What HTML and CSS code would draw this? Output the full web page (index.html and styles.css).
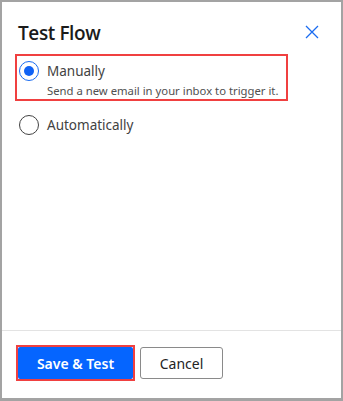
FILE: index.html
```html
<!DOCTYPE html>
<html>
<head>
<meta charset="utf-8">
<link rel="stylesheet" href="styles.css">
</head>
<body>
<div class="panel">
  <div class="header">
    <h1 class="title">Test Flow</h1>
    <button class="close" aria-label="Close">
      <svg width="14" height="14" viewBox="0 0 14 14"><path d="M1 1 L13 13 M13 1 L1 13" stroke="#1a6cf0" stroke-width="1.3" fill="none"/></svg>
    </button>
  </div>
  <div class="content">
    <div class="option highlight">
      <span class="radio checked"><span class="dot"></span></span>
      <div class="opt-text">
        <div class="label">Manually</div>
        <div class="desc">Send a new email in your inbox to trigger it.</div>
      </div>
    </div>
    <div class="option plain">
      <span class="radio"></span>
      <div class="opt-text">
        <div class="label">Automatically</div>
      </div>
    </div>
  </div>
  <div class="footer">
    <span class="primary-wrap"><button class="btn primary">Save &amp; Test</button></span>
    <button class="btn secondary">Cancel</button>
  </div>
</div>
</body>
</html>
```

FILE: styles.css
```css
* { box-sizing: border-box; }
html, body { margin: 0; padding: 0; background: #fff; }
body { font-family: "Segoe UI", "Noto Sans", "Open Sans", sans-serif; color: #242424; }
.panel {
  width: 343px;
  height: 401px;
  border: 2px solid #a3a3a3;
  border-bottom-width: 3px;
  display: flex;
  flex-direction: column;
}
.header {
  display: flex;
  justify-content: space-between;
  align-items: flex-start;
  padding: 17px 22px 0 16px;
}
.title {
  margin: 0;
  font-family: "Open Sans", "Noto Sans", sans-serif;
  font-size: 19px;
  font-weight: 600;
  line-height: 28px;
  color: #1b1b1b;
  letter-spacing: -0.4px;
}
.close {
  border: 0;
  background: none;
  padding: 0;
  margin-top: 6px;
  width: 14px;
  height: 14px;
  display: block;
}
.close svg { display: block; }
.content {
  flex: 1;
  padding: 7px 0 0 13px;
}
.option {
  display: flex;
  align-items: flex-start;
  gap: 8px;
}
.highlight {
  width: 273px;
  height: 47px;
  border: 2px solid #f04040;
  padding: 5px 0 0 2px;
}
.plain {
  padding: 14px 0 0 4px;
}
.radio {
  width: 20px;
  height: 20px;
  border-radius: 50%;
  border: 1px solid #424242;
  display: flex;
  align-items: center;
  justify-content: center;
  flex: none;
}
.radio.checked { border-color: #1a6cf0; }
.dot {
  width: 10px;
  height: 10px;
  border-radius: 50%;
  background: #0f62f5;
}
.label {
  font-size: 13.5px;
  line-height: 20px;
  color: #424242;
}
.desc {
  font-size: 11.3px;
  line-height: 20px;
  color: #505050;
}
.footer {
  border-top: 1px solid #e3e3e3;
  height: 68px;
  display: flex;
  align-items: flex-start;
  gap: 5px;
  padding: 14px 0 0 14px;
}
.primary-wrap {
  border: 2px solid #f04040;
  display: block;
}
.btn {
  font-family: inherit;
  font-size: 14px;
  height: 32px;
  border-radius: 2px;
  display: block;
  margin: 0;
}
.primary {
  width: 115px;
  background: #0565ff;
  color: #fff;
  font-weight: 600;
  border: 0;
}
.secondary {
  margin-top: 2px;
  width: 83px;
  background: #fff;
  color: #242424;
  border: 1px solid #8a8a8a;
  border-radius: 3px;
}
```
